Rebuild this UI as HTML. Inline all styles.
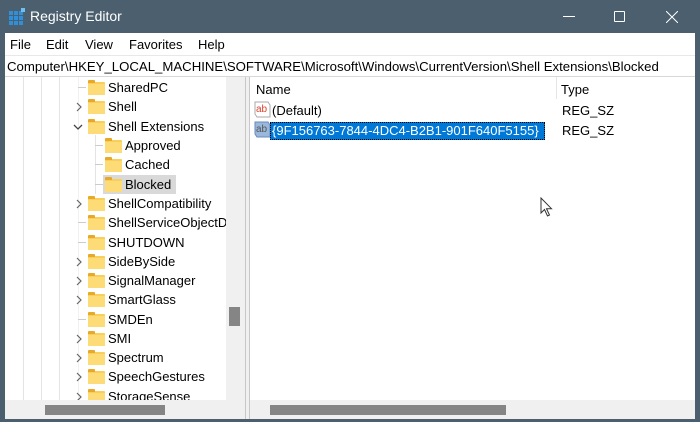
<!DOCTYPE html>
<html><head><meta charset="utf-8"><style>
*{margin:0;padding:0;box-sizing:border-box}
body{width:700px;height:422px;overflow:hidden;background:#4b5f6e;font-family:"Liberation Sans",sans-serif;font-size:13px;color:#000;position:relative}
.a{position:absolute}
.title{left:0;top:0;width:700px;height:33px;color:#fff;font-size:14px}
.menu{left:5px;top:33px;width:690px;height:22px;background:#fff}
.menu span{position:absolute;top:4px;font-size:13px}
.addr{left:5px;top:55px;width:690px;height:22px;background:#fff;border-top:1px solid #e8e8e8;border-bottom:1px solid #d8d8d8}
.tree{left:5px;top:77px;width:221px;height:323px;background:#fff;overflow:hidden}
.row{position:absolute;height:19px;line-height:19px;white-space:nowrap;font-size:13px}
.fold{position:absolute;width:17px;height:13px;background:#f9cf57;border-radius:1px}
.fold:before{content:"";position:absolute;left:0;top:-2px;width:7px;height:3px;background:#e8a92b;border-radius:1px 1px 0 0}
.fold:after{content:"";position:absolute;left:0;top:2px;width:17px;height:11px;background:#fddc78}
.vl{position:absolute;width:1px;background:#e4e4e4}
.chev{position:absolute}
</style></head><body>
<div class="a title">
 <svg class="a" style="left:9px;top:8px" width="17" height="17"><g fill="#2f8fd8"><rect x="0" y="3" width="4" height="4"/><rect x="5" y="3" width="4" height="4"/><rect x="10" y="3" width="4" height="4"/><rect x="0" y="8" width="4" height="4"/><rect x="5" y="8" width="4" height="4"/><rect x="10" y="8" width="4" height="4"/><rect x="0" y="13" width="4" height="4"/><rect x="5" y="13" width="4" height="4"/><rect x="10" y="13" width="4" height="4"/><rect x="12" y="0" width="4" height="4" fill="#6fc0f0"/></g></svg>
 <span class="a" style="left:30px;top:8px">Registry Editor</span>
 <div class="a" style="left:563px;top:16px;width:12px;height:1px;background:#fff"></div>
 <div class="a" style="left:614px;top:11px;width:11px;height:11px;border:1px solid #fff;border-radius:1px"></div>
 <svg class="a" style="left:666px;top:11px" width="12" height="12"><path d="M0 0L12 12M12 0L0 12" stroke="#fff" stroke-width="1"/></svg>
</div>
<div class="a menu"><span style="left:5px">File</span><span style="left:41px">Edit</span><span style="left:80px">View</span><span style="left:124px">Favorites</span><span style="left:193px">Help</span></div>
<div class="a addr"><span class="a" style="left:2px;top:3px;font-size:13.2px">Computer\HKEY_LOCAL_MACHINE\SOFTWARE\Microsoft\Windows\CurrentVersion\Shell Extensions\Blocked</span></div>
<div class="a tree">
 <div class="vl" style="left:18px;top:0;height:323px"></div>
 <div class="vl" style="left:36px;top:0;height:323px"></div>
 <div class="vl" style="left:54px;top:0;height:323px"></div>
 <div class="vl" style="left:73px;top:0;height:323px;opacity:.5"></div>
 <div class="vl" style="left:90px;top:58px;height:59px"></div>
 <div class="a" style="left:98px;top:98px;width:73px;height:19px;background:#d9d9d9"></div>
</div>
<div class="a" style="left:5px;top:77px;width:221px;height:323px">
 <div class="row" style="left:0;top:1px;width:221px"><div class="a" style="left:73px;top:9px;width:8px;height:1px;background:#ccc"></div><div class="fold" style="left:83px;top:4px"></div><span class="a" style="left:103px">SharedPC</span></div>
 <div class="row" style="left:0;top:20px"><svg class="chev" style="left:70px;top:5px" width="8" height="10"><path d="M2 1l4 4-4 4" fill="none" stroke="#666" stroke-width="1.2"/></svg><div class="fold" style="left:83px;top:4px"></div><span class="a" style="left:103px">Shell</span></div>
 <div class="row" style="left:0;top:40px"><svg class="chev" style="left:68px;top:6px" width="10" height="8"><path d="M1 2l4 4 4-4" fill="none" stroke="#444" stroke-width="1.3"/></svg><div class="fold" style="left:83px;top:4px"></div><span class="a" style="left:103px;white-space:nowrap">Shell Extensions</span></div>
 <div class="row" style="left:0;top:59px"><div class="a" style="left:90px;top:9px;width:8px;height:1px;background:#ccc"></div><div class="fold" style="left:100px;top:4px"></div><span class="a" style="left:120px">Approved</span></div>
 <div class="row" style="left:0;top:78px"><div class="a" style="left:90px;top:9px;width:8px;height:1px;background:#ccc"></div><div class="fold" style="left:100px;top:4px"></div><span class="a" style="left:120px">Cached</span></div>
 <div class="row" style="left:0;top:98px"><div class="a" style="left:90px;top:9px;width:8px;height:1px;background:#ccc"></div><div class="fold" style="left:100px;top:4px"></div><span class="a" style="left:120px">Blocked</span></div>
</div>
<div class="a" id="rest" style="left:5px;top:77px;width:221px;height:323px;overflow:hidden"></div>
<script>
var names=[["ShellCompatibility",1],["ShellServiceObjectDelayLoad",0],["SHUTDOWN",0],["SideBySide",1],["SignalManager",1],["SmartGlass",1],["SMDEn",0],["SMI",1],["Spectrum",1],["SpeechGestures",1],["StorageSense",1]];
var h="";for(var i=0;i<names.length;i++){var t=117+i*19.25;
h+='<div class="row" style="left:0;top:'+t+'px;width:300px">'+(names[i][1]?'<svg class="chev" style="left:70px;top:5px" width="8" height="10"><path d="M2 1l4 4-4 4" fill="none" stroke="#666" stroke-width="1.2"/></svg>':'<div class="a" style="left:73px;top:9px;width:8px;height:1px;background:#ccc"></div>')+'<div class="fold" style="left:83px;top:4px"></div><span class="a" style="left:103px">'+names[i][0]+'</span></div>';}
document.getElementById("rest").innerHTML=h;
</script>
<div class="a" style="left:226px;top:77px;width:19px;height:323px;background:#f0f0f0"></div>
<div class="a" style="left:229px;top:307px;width:11px;height:19px;background:#858585"></div>
<div class="a" style="left:245px;top:77px;width:5px;height:342px;background:#f0f0f0;border-left:1px solid #c8c8c8;border-right:1px solid #c8c8c8"></div>
<div class="a" style="left:250px;top:77px;width:445px;height:323px;background:#fff">
 <span class="a" style="left:6px;top:5px">Name</span>
 <span class="a" style="left:311px;top:5px">Type</span>
 <div class="a" style="left:306px;top:0;width:1px;height:22px;background:#e5e5e5"></div>
 <svg class="a" style="left:4px;top:24px" width="17" height="17"><path d="M1 1h13l2 3v12H3l-2-3z" fill="#fff" stroke="#aaa"/><text x="2" y="11" font-size="10" fill="#d9412a" font-family="Liberation Sans">ab</text></svg>
 <span class="a" style="left:22px;top:26px">(Default)</span>
 <span class="a" style="left:312px;top:26px">REG_SZ</span>
 <svg class="a" style="left:4px;top:44px" width="17" height="17"><path d="M1 1h13l2 3v12H3l-2-3z" fill="#9ab8dc" stroke="#6a8ab8"/><text x="2" y="11" font-size="10" fill="#555" font-family="Liberation Sans">ab</text></svg>
 <div class="a" style="left:20px;top:45px;width:275px;height:18px;background:#0078d7;border:1px dotted #000"></div>
 <span class="a" style="left:22px;top:46px;color:#fff">{9F156763-7844-4DC4-B2B1-901F640F5155}</span>
 <span class="a" style="left:312px;top:46px">REG_SZ</span>
</div>
<div class="a" style="left:5px;top:400px;width:240px;height:19px;background:#f0f0f0"></div>
<div class="a" style="left:45px;top:405px;width:120px;height:10px;background:#858585"></div>
<div class="a" style="left:250px;top:400px;width:445px;height:19px;background:#f0f0f0"></div>
<div class="a" style="left:270px;top:405px;width:236px;height:10px;background:#858585"></div>
<svg class="a" style="left:540px;top:197px" width="14" height="22"><path d="M1 1v15l3.5-3.5 3 6.5 2-1-3-6.3h5z" fill="#fff" stroke="#333" stroke-width="1"/></svg>
</body></html>
